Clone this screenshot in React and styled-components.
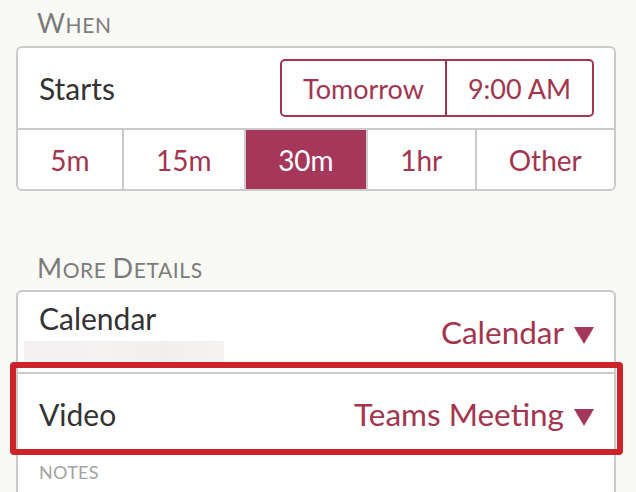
import React from "react";
import styled, { createGlobalStyle } from "styled-components";

const GlobalStyle = createGlobalStyle`
  html, body {
    margin: 0;
    padding: 0;
    background: #f9f9f5;
  }
  body {
    font-family: "Lato", "Open Sans", sans-serif;
    color: #333;
  }
`;

const ACCENT = "#a3354f";
const LINE = "#cbcbcb";

const Page = styled.div`
  width: 636px;
  height: 492px;
  overflow: hidden;
  padding: 0 20px 0 16px;
  box-sizing: border-box;
`;

const SectionTitle = styled.div`
  height: ${(props) => props.height}px;
  padding-left: 21px;
  padding-top: ${(props) => props.top}px;
  box-sizing: border-box;
  color: #7b7b7b;
  font-size: 21px;
  line-height: 26px;
  letter-spacing: 0.6px;
  text-transform: uppercase;
`;

const Cap = styled.span`
  font-size: 27px;
`;

const Card = styled.div`
  background: #fff;
  border: 2px solid ${LINE};
  border-radius: 6px;
`;

const OpenCard = styled(Card)`
  border-bottom: none;
  border-radius: 6px 6px 0 0;
`;

const StartRow = styled.div`
  height: 80px;
  display: flex;
  align-items: center;
  justify-content: space-between;
  padding: 0 20px 0 21px;
  border-bottom: 2px solid ${LINE};
`;

const Label = styled.div`
  font-size: 30px;
  color: #333;
`;

const ButtonGroup = styled.div`
  display: flex;
  height: 58px;
  border: 2px solid ${ACCENT};
  border-radius: 5px;
  box-sizing: border-box;
`;

const GroupButton = styled.div`
  display: flex;
  align-items: center;
  padding: 0 21px;
  font-size: 27px;
  color: ${ACCENT};

  & + & {
    border-left: 2px solid ${ACCENT};
  }
`;

const DurationRow = styled.div`
  display: flex;
  height: 59px;
`;

const Duration = styled.div`
  flex: 1 1 auto;
  display: flex;
  align-items: center;
  justify-content: center;
  font-size: 28px;
  color: ${(props) => (props.active ? "#fff" : ACCENT)};
  background: ${(props) => (props.active ? "#a4375a" : "transparent")};

  & + & {
    border-left: 2px solid ${LINE};
  }
  &:last-child {
    border-bottom-right-radius: 4px;
  }
  &:first-child {
    border-bottom-left-radius: 4px;
  }
`;

const CalendarRow = styled.div`
  height: 80px;
  display: flex;
  justify-content: space-between;
  padding: 0 20px 0 21px;
  border-bottom: 2px solid ${LINE};
`;

const LabelColumn = styled.div`
  display: flex;
  flex-direction: column;
  padding-top: 8px;
`;

const Redacted = styled.div`
  width: 200px;
  height: 24px;
  margin: 5px 0 0 -15px;
  background: linear-gradient(90deg, #f2f0f0, #f5f2f2 40%, #f1eeee 70%, #f6f3f3);
`;

const Value = styled.div`
  display: flex;
  align-items: baseline;
  gap: 10px;
  font-size: 31.5px;
  color: ${ACCENT};
  align-self: ${(props) => (props.low ? "flex-end" : "center")};
  padding-bottom: ${(props) => (props.low ? "21px" : "0")};
`;

const VideoRow = styled.div`
  position: relative;
  height: 79px;
  display: flex;
  align-items: center;
  justify-content: space-between;
  padding: 0 20px 0 21px;
  border-bottom: 2px solid ${LINE};

  &::after {
    content: "";
    position: absolute;
    top: -12px;
    left: -8px;
    right: -9px;
    bottom: -2px;
    border: 6px solid #cc2229;
    border-radius: 4px;
    pointer-events: none;
  }
`;

const Notes = styled.div`
  padding: 6px 0 0 21px;
  height: 60px;
  font-size: 18px;
  color: #a3a3a3;
  letter-spacing: 0.3px;
`;

const Caret = () => (
  <svg width="20" height="17" viewBox="0 0 20 17">
    <path d="M0 0 H20 L10 17 Z" fill="#a3385a" />
  </svg>
);

const SmallCaps = ({ text }) =>
  text.split(" ").map((word, i) => (
    <React.Fragment key={i}>
      {i > 0 && " "}
      <Cap>{word[0]}</Cap>
      {word.slice(1)}
    </React.Fragment>
  ));

export default function App() {
  return (
    <Page>
      <GlobalStyle />
      <SectionTitle height={46} top={10}>
        <SmallCaps text="When" />
      </SectionTitle>
      <Card>
        <StartRow>
          <Label>Starts</Label>
          <ButtonGroup>
            <GroupButton>Tomorrow</GroupButton>
            <GroupButton>9:00 AM</GroupButton>
          </ButtonGroup>
        </StartRow>
        <DurationRow>
          <Duration>5m</Duration>
          <Duration>15m</Duration>
          <Duration active>30m</Duration>
          <Duration>1hr</Duration>
          <Duration>Other</Duration>
        </DurationRow>
      </Card>
      <SectionTitle height={99} top={64}>
        <SmallCaps text="More Details" />
      </SectionTitle>
      <OpenCard>
        <CalendarRow>
          <LabelColumn>
            <Label>Calendar</Label>
            <Redacted />
          </LabelColumn>
          <Value low>
            Calendar
            <Caret />
          </Value>
        </CalendarRow>
        <VideoRow>
          <Label>Video</Label>
          <Value>
            Teams Meeting
            <Caret />
          </Value>
        </VideoRow>
        <Notes>NOTES</Notes>
      </OpenCard>
    </Page>
  );
}
